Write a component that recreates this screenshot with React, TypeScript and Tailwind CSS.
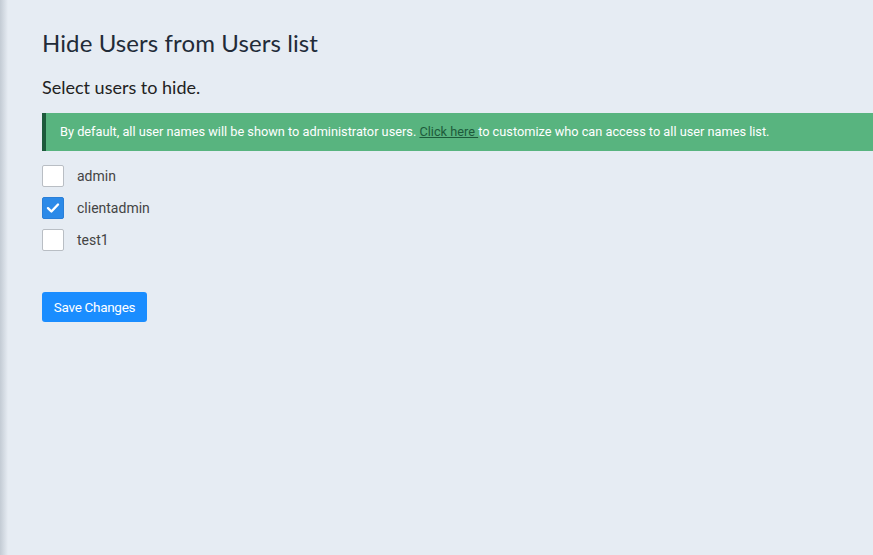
const USERS = [
  { name: "admin", checked: false },
  { name: "clientadmin", checked: true },
  { name: "test1", checked: false },
];

function Box({ checked }: { checked: boolean }) {
  if (checked) {
    return (
      <span className="flex h-[22px] w-[22px] items-center justify-center rounded-[2px] border border-[#2a7fd8] bg-[#2c8ae8]">
        <svg width="14" height="12" viewBox="0 0 14 12" fill="none">
          <path
            d="M2 6.2l3.4 3.3L12 2.5"
            stroke="#fff"
            strokeWidth="2.4"
            strokeLinecap="round"
            strokeLinejoin="round"
          />
        </svg>
      </span>
    );
  }
  return (
    <span className="h-[22px] w-[22px] rounded-[2px] border border-[#b9bec4] bg-white" />
  );
}

export default function App() {
  return (
    <div className="flex h-[555px] w-[873px] overflow-hidden bg-[#e6ecf3]">
      <div className="w-[8px] shrink-0 bg-gradient-to-r from-[#c3cbd4] to-[#e6ecf3]" />
      <main className="flex-1 pl-[34px] pt-[28px] font-['Roboto',sans-serif]">
        <h1 className="font-['Lato',sans-serif] text-[24px] leading-[30px] tracking-[0.1px] font-normal text-[#222b38]">
          Hide Users from Users list
        </h1>
        <p className="mt-[18px] font-['Lato',sans-serif] text-[18px] leading-[22px] text-[#222]">
          Select users to hide.
        </p>
        <div className="mt-[15px] -mr-4 flex h-[38px] items-center border-l-4 border-[#1d5a3b] bg-[#58b47f] pl-[14px] text-[12.75px] text-white">
          By default, all user names will be shown to administrator users.&nbsp;
          <a href="#" className="text-[#1d5a3b] underline">
            Click here&nbsp;
          </a>
          to customize who can access to all user names list.
        </div>
        <ul className="mt-[14px] flex flex-col gap-[10px]">
          {USERS.map((u) => (
            <li key={u.name} className="flex h-[22px] items-center gap-[13px]">
              <Box checked={u.checked} />
              <span className="text-[14px] text-[#444]">{u.name}</span>
            </li>
          ))}
        </ul>
        <button
          type="button"
          className="mt-[41px] h-[30px] w-[105px] rounded-[3px] bg-[#1a8dff] text-[13.5px] tracking-[-0.3px] text-white"
        >
          Save Changes
        </button>
      </main>
    </div>
  );
}
